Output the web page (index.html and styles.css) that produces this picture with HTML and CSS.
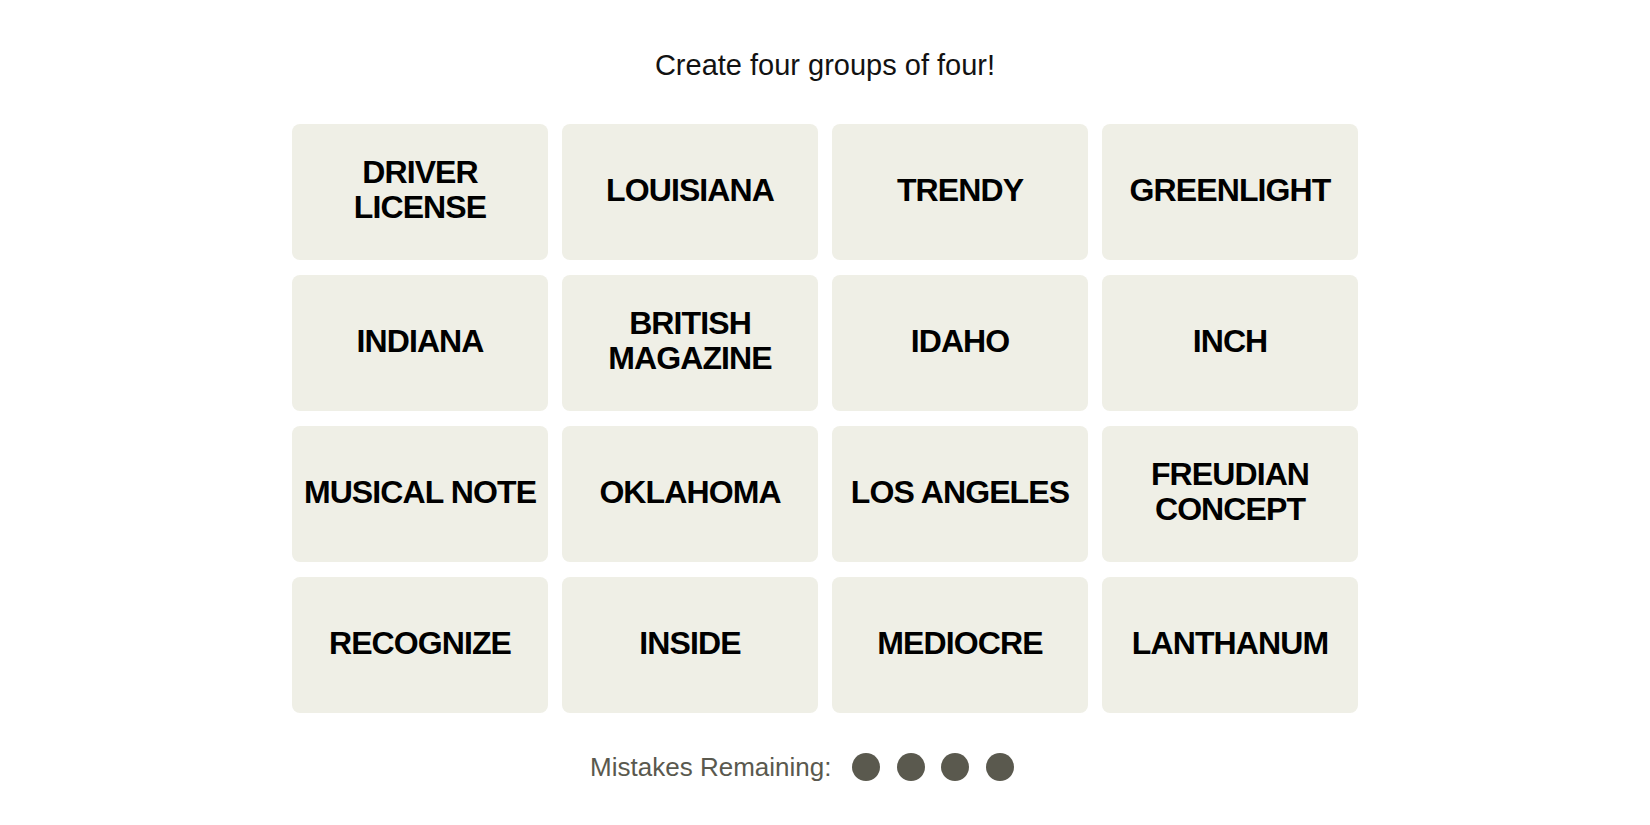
FILE: index.html
```html
<!DOCTYPE html>
<html lang="en">
<head>
<meta charset="utf-8">
<title>Connections</title>
<link rel="stylesheet" href="styles.css">
</head>
<body>
<main class="game">
  <p class="prompt">Create four groups of four!</p>
  <div class="board">
    <button class="tile">DRIVER LICENSE</button>
    <button class="tile">LOUISIANA</button>
    <button class="tile">TRENDY</button>
    <button class="tile">GREENLIGHT</button>
    <button class="tile">INDIANA</button>
    <button class="tile">BRITISH MAGAZINE</button>
    <button class="tile">IDAHO</button>
    <button class="tile">INCH</button>
    <button class="tile">MUSICAL NOTE</button>
    <button class="tile">OKLAHOMA</button>
    <button class="tile">LOS ANGELES</button>
    <button class="tile">FREUDIAN CONCEPT</button>
    <button class="tile">RECOGNIZE</button>
    <button class="tile">INSIDE</button>
    <button class="tile">MEDIOCRE</button>
    <button class="tile">LANTHANUM</button>
  </div>
  <div class="mistakes">
    <span class="mistakes-label">Mistakes Remaining:</span>
    <span class="dots">
      <span class="dot"></span>
      <span class="dot"></span>
      <span class="dot"></span>
      <span class="dot"></span>
    </span>
  </div>
</main>
</body>
</html>
```

FILE: styles.css
```css
html, body {
  margin: 0;
  padding: 0;
  background: #ffffff;
}

body {
  font-family: "Liberation Sans", Arial, sans-serif;
  color: #000000;
}

.game {
  display: flex;
  flex-direction: column;
  align-items: center;
  padding-top: 49px;
}

.prompt {
  margin: 0;
  font-size: 29px;
  line-height: 32px;
  font-weight: 400;
  color: #121212;
}

.board {
  margin-top: 43px;
  display: grid;
  grid-template-columns: repeat(4, 256px);
  grid-auto-rows: 136px;
  gap: 15px 14px;
}

.tile {
  display: flex;
  align-items: center;
  justify-content: center;
  padding: 0 7px 4px;
  border: none;
  border-radius: 8px;
  background: #efefe6;
  color: #000000;
  font-family: "Liberation Sans", Arial, sans-serif;
  font-size: 32px;
  font-weight: 700;
  letter-spacing: -0.9px;
  line-height: 35px;
  text-align: center;
  text-transform: uppercase;
}

.mistakes {
  margin-top: 40px;
  display: flex;
  align-items: center;
  height: 28px;
  padding-right: 46px;
}

.mistakes-label {
  font-size: 26px;
  line-height: 28px;
  color: #5a594e;
  margin-right: 21px;
}

.dots {
  display: flex;
  gap: 16.5px;
}

.dot {
  width: 28px;
  height: 28px;
  border-radius: 50%;
  background: #5a594e;
}
```
